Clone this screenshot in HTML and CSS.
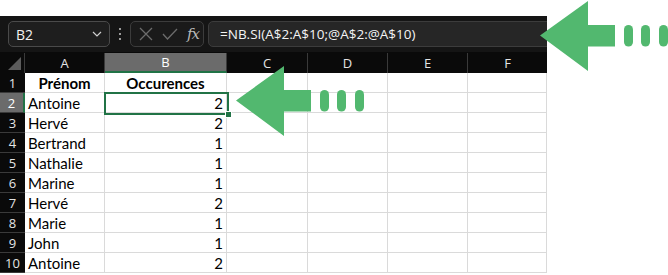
FILE: index.html
```html
<!DOCTYPE html>
<html lang="fr">
<head>
    <meta charset="UTF-8">
    <title>NB.SI</title>
    <link rel="stylesheet" href="styles.css">
</head>
<body>
    <div class="sheet">
        <div class="formula-bar">
            <div class="name-box">
                <span>B2</span>
                <svg class="chevron" width="10" height="6" viewBox="0 0 10 6"><path d="M1 1 L5 5 L9 1" fill="none" stroke="#cfcfcf" stroke-width="1.2"/></svg>
            </div>
            <div class="grip"><i></i><i></i><i></i></div>
            <div class="fx-box">
                <svg width="14" height="14" viewBox="0 0 14 14"><path d="M1 1 L13 13 M13 1 L1 13" stroke="#6c6c6c" stroke-width="1.3"/></svg>
                <svg width="16" height="12" viewBox="0 0 16 12"><path d="M1 6 L5.5 11 L15 1" fill="none" stroke="#6c6c6c" stroke-width="1.3"/></svg>
                <span class="fx">fx</span>
            </div>
            <div class="formula">=NB.SI(A$2:A$10;@A$2:@A$10)</div>
        </div>

        <div class="grid">
            <div class="corner"><span class="tri"></span></div>
            <div class="col-head">A</div>
            <div class="col-head active">B</div>
            <div class="col-head">C</div>
            <div class="col-head">D</div>
            <div class="col-head">E</div>
            <div class="col-head last">F</div>

            <div class="row-head">1</div>
            <div class="cell title">Prénom</div>
            <div class="cell title">Occurences</div>
            <div class="cell"></div><div class="cell"></div><div class="cell"></div><div class="cell"></div>

            <div class="row-head active">2</div>
            <div class="cell">Antoine</div>
            <div class="cell num">2</div>
            <div class="cell"></div><div class="cell"></div><div class="cell"></div><div class="cell"></div>

            <div class="row-head">3</div>
            <div class="cell">Hervé</div>
            <div class="cell num">2</div>
            <div class="cell"></div><div class="cell"></div><div class="cell"></div><div class="cell"></div>

            <div class="row-head">4</div>
            <div class="cell">Bertrand</div>
            <div class="cell num">1</div>
            <div class="cell"></div><div class="cell"></div><div class="cell"></div><div class="cell"></div>

            <div class="row-head">5</div>
            <div class="cell">Nathalie</div>
            <div class="cell num">1</div>
            <div class="cell"></div><div class="cell"></div><div class="cell"></div><div class="cell"></div>

            <div class="row-head">6</div>
            <div class="cell">Marine</div>
            <div class="cell num">1</div>
            <div class="cell"></div><div class="cell"></div><div class="cell"></div><div class="cell"></div>

            <div class="row-head">7</div>
            <div class="cell">Hervé</div>
            <div class="cell num">2</div>
            <div class="cell"></div><div class="cell"></div><div class="cell"></div><div class="cell"></div>

            <div class="row-head">8</div>
            <div class="cell">Marie</div>
            <div class="cell num">1</div>
            <div class="cell"></div><div class="cell"></div><div class="cell"></div><div class="cell"></div>

            <div class="row-head">9</div>
            <div class="cell">John</div>
            <div class="cell num">1</div>
            <div class="cell"></div><div class="cell"></div><div class="cell"></div><div class="cell"></div>

            <div class="row-head">10</div>
            <div class="cell">Antoine</div>
            <div class="cell num">2</div>
            <div class="cell"></div><div class="cell"></div><div class="cell"></div><div class="cell"></div>
        </div>

        <!-- selected cell B2 -->
        <div class="selection"><span class="handle"></span></div>
    </div>

    <svg class="arrow arrow-top" width="128" height="71" viewBox="0 0 128 71">
        <path d="M0 34.5 L48 0 L48 24 L75 24 L75 45.5 L48 45.5 L48 70 Z" fill="#52b86f"/>
        <rect x="84" y="24" width="9" height="21.5" rx="4.5" fill="#52b86f"/>
        <rect x="101" y="24" width="9" height="21.5" rx="4.5" fill="#52b86f"/>
        <rect x="119" y="24" width="9" height="21.5" rx="4.5" fill="#52b86f"/>
    </svg>

    <svg class="arrow arrow-cell" width="128" height="71" viewBox="0 0 128 71">
        <path d="M0 34.5 L48 0 L48 24 L75 24 L75 45.5 L48 45.5 L48 70 Z" fill="#52b86f"/>
        <rect x="84" y="24" width="9" height="21.5" rx="4.5" fill="#52b86f"/>
        <rect x="101" y="24" width="9" height="21.5" rx="4.5" fill="#52b86f"/>
        <rect x="119" y="24" width="9" height="21.5" rx="4.5" fill="#52b86f"/>
    </svg>
</body>
</html>
```

FILE: styles.css
```css
* {
    margin: 0;
    padding: 0;
    box-sizing: border-box;
}

body {
    position: relative;
    width: 668px;
    height: 275px;
    background: #ffffff;
    overflow: hidden;
    font-family: "Open Sans", "Noto Sans", sans-serif;
}

.sheet {
    position: relative;
    width: 547px;
    margin-top: 16px;
    background: #0a0a0a;
    overflow: hidden;
}

/* formula bar */
.formula-bar {
    display: flex;
    align-items: center;
    height: 37px;
    padding-left: 8px;
    background: #151515;
    border-bottom: 1px solid #0a0a0a;
}

.name-box {
    display: flex;
    align-items: center;
    justify-content: space-between;
    width: 102px;
    height: 26px;
    padding: 0 7px 0 7px;
    border: 1px solid #4a4a4a;
    border-radius: 5px;
    background: #1e1e1e;
    color: #f2f2f2;
    font-size: 14px;
}

.grip {
    display: flex;
    flex-direction: column;
    gap: 3px;
    width: 4px;
    margin: 0 8px;
    align-items: center;
}

.grip i {
    display: block;
    width: 2px;
    height: 2px;
    background: #9a9a9a;
}

.fx-box {
    display: flex;
    align-items: center;
    gap: 9px;
    width: 74px;
    height: 26px;
    padding-left: 8px;
    border: 1px solid #3c3c3c;
    border-radius: 5px;
    background: #1a1a1a;
}

.fx {
    font-family: "DejaVu Serif", "Liberation Serif", serif;
    font-style: italic;
    font-size: 15px;
    color: #b8b8b8;
    letter-spacing: -1px;
}

.formula {
    flex: 1;
    height: 26px;
    margin-left: 4px;
    margin-right: -12px;
    padding-left: 11px;
    border: 1px solid #3c3c3c;
    border-radius: 5px;
    background: #262626;
    color: #f4f4f4;
    font-size: 13.5px;
    line-height: 24px;
}

/* grid */
.grid {
    display: grid;
    grid-template-columns: 25px 80px 122px 81px 80px 80px 79px;
    grid-auto-rows: 20px;
    background: #ffffff;
}

.corner {
    position: relative;
    background: #0a0a0a;
    border-right: 1px solid #3a3a3a;
}

.corner .tri {
    position: absolute;
    right: 3px;
    bottom: 3px;
    width: 0;
    height: 0;
    border-left: 13px solid transparent;
    border-bottom: 13px solid #5c5c5c;
}

.col-head {
    display: flex;
    align-items: center;
    justify-content: center;
    background: #0a0a0a;
    color: #e4e4e4;
    font-size: 13px;
    border-right: 1px solid #3a3a3a;
}

.col-head.last {
    border-right: none;
}

.col-head.active {
    background: #6b6b6b;
    color: #ffffff;
    border-bottom: 2px solid #217346;
}

.row-head {
    display: flex;
    align-items: center;
    justify-content: center;
    background: #0a0a0a;
    color: #e4e4e4;
    font-size: 13px;
    border-bottom: 1px solid #3a3a3a;
}

.row-head.active {
    background: #6b6b6b;
    color: #ffffff;
    border-right: 2px solid #217346;
}

.cell {
    display: flex;
    align-items: center;
    padding: 0 3px;
    border-right: 1px solid #dadada;
    border-bottom: 1px solid #dadada;
    color: #000000;
    font-family: "Lato", "Liberation Sans", sans-serif;
    font-size: 15px;
}

.cell.title {
    justify-content: center;
    font-weight: bold;
}

.cell.num {
    justify-content: flex-end;
}

.selection {
    position: absolute;
    left: 104px;
    top: 76px;
    width: 125px;
    height: 23px;
    border: 2px solid #217346;
}

.selection .handle {
    position: absolute;
    right: -5px;
    bottom: -5px;
    width: 7px;
    height: 7px;
    background: #217346;
    border: 1px solid #ffffff;
}

/* callout arrows */
.arrow {
    position: absolute;
}

.arrow-top {
    left: 540px;
    top: 1px;
}

.arrow-cell {
    left: 236px;
    top: 66px;
}
```
